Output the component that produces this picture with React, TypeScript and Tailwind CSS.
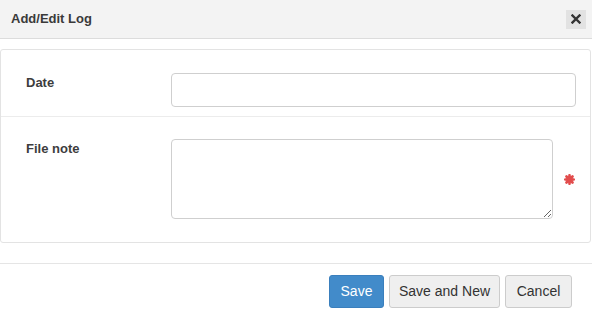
export default function App() {
  return (
    <div className="w-[592px] h-[315px] bg-white font-['Liberation_Sans',Arial,sans-serif] text-[#333] overflow-hidden">
      {/* Header */}
      <div className="h-[39px] flex items-center justify-between pl-[11px] pr-[6px] bg-[#f3f3f3] border-b border-[#dcdcdc]">
        <span className="text-[13px] font-bold text-[#3a3a3a]">Add/Edit Log</span>
        <button
          type="button"
          className="w-[20px] h-[19px] flex items-center justify-center bg-[#e2e2e2] text-[#333]"
        >
          <svg width="10" height="10" viewBox="0 0 10 10">
            <path d="M1.5 1.5l7 7M8.5 1.5l-7 7" stroke="#333" strokeWidth="2.4" strokeLinecap="square" />
          </svg>
        </button>
      </div>

      {/* Body */}
      <div className="pt-[10px] pr-[1px]">
        <div className="border border-[#e3e3e3] rounded-[3px]">
          <div className="flex items-start pt-[23px] pb-[9px] border-b border-[#ececec]">
            <label className="w-[170px] pl-[25px] text-[13px] font-bold text-[#3d3d3d]">Date</label>
            <input
              type="text"
              className="w-[405px] h-[34px] border border-[#cfcfcf] rounded-[4px] bg-white"
            />
          </div>
          <div className="flex items-start pt-[22px] pb-[23px]">
            <label className="w-[170px] pl-[25px] text-[13px] font-bold text-[#3d3d3d]">File note</label>
            <textarea className="w-[382px] h-[80px] border border-[#cfcfcf] rounded-[4px] bg-white block" />
            <svg className="ml-[11px] mt-[35px]" width="11" height="11" viewBox="0 0 11 11">
              <g stroke="#e24c4c" strokeWidth="2.6" strokeLinecap="round">
                <path d="M5.5 1.2v8.6M1.2 5.5h8.6M2.5 2.5l6 6M8.5 2.5l-6 6" />
              </g>
            </svg>
          </div>
        </div>
      </div>

      {/* Footer */}
      <div className="mt-[20px] border-t border-[#e5e5e5] flex justify-end gap-[5px] pt-[11px] pr-[20px]">
        <button type="button" className="h-[33px] w-[55px] rounded-[3px] bg-[#428bca] border border-[#3a7fbd] text-white text-[14px]">
          Save
        </button>
        <button type="button" className="h-[33px] w-[111px] rounded-[3px] bg-[#efefef] border border-[#cccccc] text-[#333] text-[14px]">
          Save and New
        </button>
        <button type="button" className="h-[33px] w-[67px] rounded-[3px] bg-[#efefef] border border-[#cccccc] text-[#333] text-[14px]">
          Cancel
        </button>
      </div>
    </div>
  );
}
